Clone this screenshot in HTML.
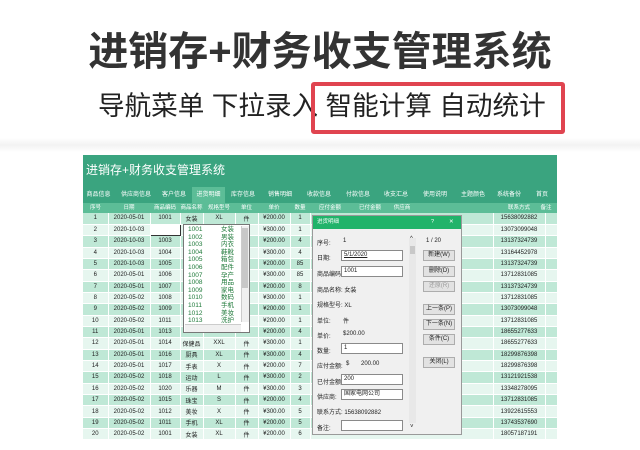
<!DOCTYPE html>
<html><head><meta charset="utf-8"><style>
*{margin:0;padding:0;box-sizing:border-box}
body{width:640px;height:450px;background:#fff;position:relative;overflow:hidden;font-family:"Liberation Sans","Noto Sans CJK SC",sans-serif;color:#222}
.a{position:absolute;white-space:nowrap}
#t{left:0;width:640px;top:26px;text-align:center;font-size:40px;font-weight:bold;color:#333;line-height:52px}
#s{left:98px;top:88px;font-size:26.6px;color:#222;line-height:36px}
#box{left:311px;top:82px;width:254px;height:52px;border:4px solid #e04450;border-radius:3px}
#fade{left:0;top:138px;width:640px;height:14px;background:linear-gradient(#fff,#f2f2f2,#fff)}
#app{left:83px;top:155px;width:474px;height:285px;background:#e8f6f0;overflow:hidden}
.hd{left:0;top:0;width:474px;height:48px;background:#3aa47f}
.ttl{left:3px;top:6px;color:#fff;font-size:12px}
.nav{top:33px;height:14px;font-size:6px;color:#fff;line-height:14px;text-align:center}
.hr{left:0;top:48px;width:474px;height:10px;background:#5cbd97}
.hc{top:48px;font-size:5.5px;color:#fff;line-height:10px;text-align:center}
table{position:absolute;left:0;top:58px;width:474px;border-collapse:collapse;table-layout:fixed}
td{height:11.35px;font-size:6px;text-align:center;border-right:1px solid #fff;border-bottom:1px solid #fff;padding:0;overflow:hidden;white-space:nowrap}
tr:nth-child(odd) td{background:#bfe8d6}
tr:nth-child(even) td{background:#e6f6ef}
.dlg{left:312px;top:215px;width:150px;height:220px;background:#f0f0f0;border:1px solid #9a9a9a}
.dt{left:0;top:0;width:148px;height:13px;background:#21b36a;color:#fff;font-size:5.5px;line-height:13px;padding-left:4px}
.l{font-size:6px;color:#222}
.in{background:#fff;border:1px solid #8a8a8a;height:11px;font-size:6px;line-height:9px;padding-left:2px}
.bt{background:#e2e2e2;border:1px solid #adadad;width:32px;height:11px;font-size:6px;line-height:9px;text-align:center}
.dd{left:183px;top:224px;width:67px;height:109px;background:#fff;border:1px solid #777}
.di{font-size:6.5px;line-height:7.6px;color:#1f7a3a}
</style></head><body>
<div class="a" id="t">进销存+财务收支管理系统</div>
<div class="a" id="s">导航菜单 下拉录入 智能计算 自动统计</div>
<div class="a" id="box"></div>
<div class="a" id="fade"></div>
<div class="a" id="app">
<div class="a hd"></div>
<div class="a ttl">进销存+财务收支管理系统</div>
<div class="a" style="left:109px;top:32px;width:33px;height:16px;background:#5cbd97"></div>
<div class="a nav" style="left:0;width:31px">商品信息</div>
<div class="a nav" style="left:33px;width:40px">供应商信息</div>
<div class="a nav" style="left:74px;width:34px">客户信息</div>
<div class="a nav" style="left:109px;width:33px">进货明细</div>
<div class="a nav" style="left:143px;width:34px">库存信息</div>
<div class="a nav" style="left:178px;width:38px">销售明细</div>
<div class="a nav" style="left:216px;width:40px">收款信息</div>
<div class="a nav" style="left:256px;width:38px">付款信息</div>
<div class="a nav" style="left:294px;width:38px">收支汇总</div>
<div class="a nav" style="left:332px;width:40px">使用说明</div>
<div class="a nav" style="left:372px;width:36px">主题颜色</div>
<div class="a nav" style="left:408px;width:36px">系统备份</div>
<div class="a nav" style="left:444px;width:30px">首页</div>
<div class="a hr"></div>
<div class="a hc" style="left:0;width:25px">序号</div>
<div class="a hc" style="left:25px;width:42px">日期</div>
<div class="a hc" style="left:67px;width:30px">商品编码</div>
<div class="a hc" style="left:97px;width:23px">商品名称</div>
<div class="a hc" style="left:120px;width:32px">规格型号</div>
<div class="a hc" style="left:152px;width:23px">单位</div>
<div class="a hc" style="left:175px;width:32px">单价</div>
<div class="a hc" style="left:207px;width:20px">数量</div>
<div class="a hc" style="left:227px;width:40px">应付金额</div>
<div class="a hc" style="left:267px;width:40px">已付金额</div>
<div class="a hc" style="left:307px;width:24px">供应商</div>
<div class="a hc" style="left:410px;width:52px">联系方式</div>
<div class="a hc" style="left:452px;width:22px">备注</div>
<table>
<colgroup><col style="width:25px"><col style="width:42px"><col style="width:30px"><col style="width:23px"><col style="width:32px"><col style="width:23px"><col style="width:32px"><col style="width:20px"><col style="width:183px"><col style="width:52px"><col style="width:12px"></colgroup>
<tr><td>1</td><td>2020-05-01</td><td>1001</td><td>女装</td><td>XL</td><td>件</td><td>¥200.00</td><td>1</td><td></td><td>15638092882</td><td></td></tr>
<tr><td>2</td><td>2020-10-03</td><td style="background:#fff;border:1px solid #333"></td><td></td><td></td><td></td><td>¥300.00</td><td>1</td><td></td><td>13073099048</td><td></td></tr>
<tr><td>3</td><td>2020-10-03</td><td>1003</td><td></td><td></td><td></td><td>¥200.00</td><td>4</td><td></td><td>13137324739</td><td></td></tr>
<tr><td>4</td><td>2020-10-03</td><td>1004</td><td></td><td></td><td></td><td>¥300.00</td><td>4</td><td></td><td>13164452978</td><td></td></tr>
<tr><td>5</td><td>2020-10-03</td><td>1005</td><td></td><td></td><td></td><td>¥200.00</td><td>85</td><td></td><td>13137324739</td><td></td></tr>
<tr><td>6</td><td>2020-05-01</td><td>1006</td><td></td><td></td><td></td><td>¥300.00</td><td>85</td><td></td><td>13712831085</td><td></td></tr>
<tr><td>7</td><td>2020-05-01</td><td>1007</td><td></td><td></td><td></td><td>¥200.00</td><td>8</td><td></td><td>13137324739</td><td></td></tr>
<tr><td>8</td><td>2020-05-02</td><td>1008</td><td></td><td></td><td></td><td>¥300.00</td><td>1</td><td></td><td>13712831085</td><td></td></tr>
<tr><td>9</td><td>2020-05-02</td><td>1009</td><td></td><td></td><td></td><td>¥200.00</td><td>1</td><td></td><td>13073099048</td><td></td></tr>
<tr><td>10</td><td>2020-05-02</td><td>1011</td><td></td><td></td><td></td><td>¥200.00</td><td>1</td><td></td><td>13712831085</td><td></td></tr>
<tr><td>11</td><td>2020-05-01</td><td>1013</td><td></td><td></td><td></td><td>¥200.00</td><td>4</td><td></td><td>18655277633</td><td></td></tr>
<tr><td>12</td><td>2020-05-01</td><td>1014</td><td>保健品</td><td>XXL</td><td>件</td><td>¥300.00</td><td>1</td><td></td><td>18655277633</td><td></td></tr>
<tr><td>13</td><td>2020-05-01</td><td>1016</td><td>厨具</td><td>XL</td><td>件</td><td>¥300.00</td><td>4</td><td></td><td>18299876398</td><td></td></tr>
<tr><td>14</td><td>2020-05-01</td><td>1017</td><td>手表</td><td>X</td><td>件</td><td>¥200.00</td><td>7</td><td></td><td>18299876398</td><td></td></tr>
<tr><td>15</td><td>2020-05-02</td><td>1018</td><td>运动</td><td>L</td><td>件</td><td>¥300.00</td><td>2</td><td></td><td>13121921538</td><td></td></tr>
<tr><td>16</td><td>2020-05-02</td><td>1020</td><td>乐器</td><td>M</td><td>件</td><td>¥300.00</td><td>3</td><td></td><td>13348278095</td><td></td></tr>
<tr><td>17</td><td>2020-05-02</td><td>1015</td><td>珠宝</td><td>S</td><td>件</td><td>¥200.00</td><td>4</td><td></td><td>13712831085</td><td></td></tr>
<tr><td>18</td><td>2020-05-02</td><td>1012</td><td>美妆</td><td>X</td><td>件</td><td>¥300.00</td><td>5</td><td></td><td>13922615553</td><td></td></tr>
<tr><td>19</td><td>2020-05-02</td><td>1011</td><td>手机</td><td>XL</td><td>件</td><td>¥200.00</td><td>5</td><td></td><td>13743537690</td><td></td></tr>
<tr><td>20</td><td>2020-05-02</td><td>1001</td><td>女装</td><td>XL</td><td>件</td><td>¥200.00</td><td>6</td><td></td><td>18057187191</td><td></td></tr>
</table>
</div>

<div class="a dd">
<div class="a di" style="left:4px;top:1px">1001<br>1002<br>1003<br>1004<br>1005<br>1006<br>1007<br>1008<br>1009<br>1010<br>1011<br>1012<br>1013</div>
<div class="a di" style="left:37px;top:1px">女装<br>男装<br>内衣<br>鞋靴<br>箱包<br>配件<br>孕产<br>用品<br>家电<br>数码<br>手机<br>美妆<br>洗护</div>
<div class="a" style="left:57px;top:1px;width:8px;height:96px;background:#f0f0f0;border-left:1px solid #ccc"></div>
<div class="a" style="left:58px;top:3px;width:6px;height:60px;background:#c8c8c8"></div>
<div class="a" style="left:1px;top:99px;width:56px;height:8px;background:#f0f0f0;border-top:1px solid #ccc"></div>
</div>

<div class="a dlg">
<div class="a dt">进货明细<span style="position:absolute;left:118px">?</span><span style="position:absolute;left:136px">✕</span></div>
<div class="a l" style="left:4px;top:22px">序号:</div><div class="a l" style="left:30px;top:22px">1</div>
<div class="a l" style="left:4px;top:37px">日期:</div><div class="a in" style="left:28px;top:34px;width:62px;text-decoration:underline">5/1/2020</div>
<div class="a l" style="left:4px;top:53px">商品编码:</div><div class="a in" style="left:28px;top:50px;width:62px">1001</div>
<div class="a l" style="left:4px;top:69px">商品名称: 女装</div>
<div class="a l" style="left:4px;top:84px">规格型号: XL</div>
<div class="a l" style="left:4px;top:100px">单位:</div><div class="a l" style="left:30px;top:100px">件</div>
<div class="a l" style="left:4px;top:115px">单价:</div><div class="a l" style="left:30px;top:115px">$200.00</div>
<div class="a l" style="left:4px;top:130px">数量:</div><div class="a in" style="left:28px;top:127px;width:62px">1</div>
<div class="a l" style="left:4px;top:145px">应付金额:</div><div class="a l" style="left:33px;top:145px">$</div><div class="a l" style="left:48px;top:145px">200.00</div>
<div class="a l" style="left:4px;top:161px">已付金额:</div><div class="a in" style="left:28px;top:158px;width:62px">200</div>
<div class="a l" style="left:4px;top:176px">供应商:</div><div class="a in" style="left:28px;top:173px;width:62px">国家电网公司</div>
<div class="a l" style="left:4px;top:191px">联系方式: 15638092882</div>
<div class="a l" style="left:4px;top:207px">备注:</div><div class="a in" style="left:28px;top:204px;width:62px"></div>
<div class="a" style="left:96px;top:22px;width:7px;height:185px;background:#e8e8e8"></div>
<div class="a l" style="left:97px;top:20px">^</div>
<div class="a" style="left:97px;top:30px;width:5px;height:8px;background:#c8c8c8"></div>
<div class="a l" style="left:97px;top:208px">˅</div>
<div class="a l" style="left:113px;top:22px">1 / 20</div>
<div class="a bt" style="left:110px;top:34px">新建(W)</div>
<div class="a bt" style="left:110px;top:50px">删除(D)</div>
<div class="a bt" style="left:110px;top:65px;color:#999">还原(R)</div>
<div class="a bt" style="left:110px;top:88px">上一条(P)</div>
<div class="a bt" style="left:110px;top:103px">下一条(N)</div>
<div class="a bt" style="left:110px;top:118px">条件(C)</div>
<div class="a bt" style="left:110px;top:141px">关闭(L)</div>
</div>
</body></html>
